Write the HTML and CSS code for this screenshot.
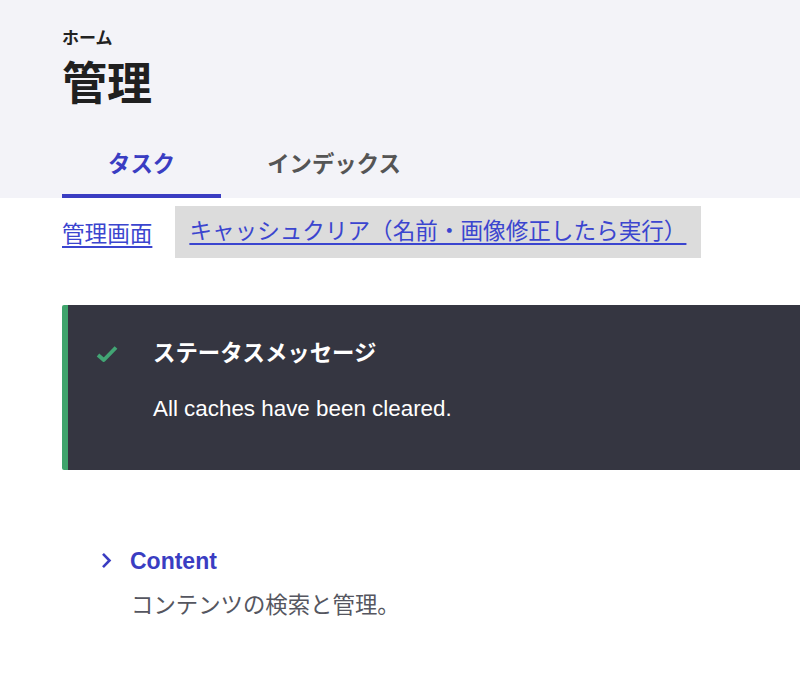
FILE: index.html
```html
<!DOCTYPE html>
<html lang="ja">
<head>
<meta charset="utf-8">
<title>管理</title>
<link rel="stylesheet" href="styles.css">
</head>
<body>
<header class="page-header">
  <nav class="breadcrumb"><a href="#">ホーム</a></nav>
  <h1 class="page-title">管理</h1>
  <nav class="tabs">
    <a class="tab is-active" href="#">タスク</a>
    <a class="tab" href="#">インデックス</a>
  </nav>
</header>
<main class="content">
  <div class="shortcuts">
    <a class="shortcut" href="#">管理画面</a>
    <span class="shortcut-box"><a class="shortcut" href="#">キャッシュクリア（名前・画像修正したら実行）</a></span>
  </div>
  <div class="message">
    <div class="message-icon">
      <svg width="22" height="18" viewBox="0 0 22 18"><path d="M2 10 L7.8 15 L20 2.5" fill="none" stroke="#42a574" stroke-width="3.8" stroke-linejoin="round"/></svg>
    </div>
    <div class="message-body">
      <h2 class="message-title">ステータスメッセージ</h2>
      <p class="message-text">All caches have been cleared.</p>
    </div>
  </div>
  <div class="admin-item">
    <div class="admin-head">
      <span class="chevron"><svg width="12" height="17" viewBox="0 0 12 17"><path d="M3 1.8 L9.5 8.5 L3 15.2" fill="none" stroke="#3a3dc2" stroke-width="2.6"/></svg></span>
      <a class="admin-link" href="#">Content</a>
    </div>
    <p class="admin-desc">コンテンツの検索と管理。</p>
  </div>
</main>
</body>
</html>
```
FILE: styles.css
```css
html, body {
  margin: 0;
  padding: 0;
}
body {
  font-family: "Liberation Sans", "Noto Sans CJK JP", sans-serif;
  color: #222;
  background: #fff;
  overflow: hidden;
}
a {
  text-decoration: none;
  color: inherit;
}
.page-header {
  background: #f3f3f8;
  padding: 29px 0 0 62px;
}
.breadcrumb {
  font-size: 17px;
  line-height: 20px;
  font-weight: bold;
  color: #222;
}
.page-title {
  margin: 11px 0 0;
  font-size: 45px;
  line-height: 50px;
  font-weight: bold;
  color: #202020;
}
.tabs {
  display: flex;
  margin-top: 24px;
}
.tab {
  padding: 16px 46px 14px;
  line-height: 30px;
  font-size: 22.4px;
  font-weight: bold;
  color: #555;
  border-bottom: 4px solid transparent;
}
.tab.is-active {
  color: #3a3dc2;
  border-bottom-color: #3a3dc2;
}
.shortcuts {
  display: flex;
  align-items: center;
  gap: 23px;
  margin: 8px 0 0 62px;
  font-size: 22.6px;
}
.shortcut {
  color: #3b45cf;
  text-decoration: underline;
  text-underline-offset: 4px;
  text-decoration-thickness: 1.5px;
}
.shortcut-box {
  display: block;
  background: #dcdcdc;
  height: 52px;
  line-height: 52px;
  padding: 0 15px 0 14px;
}
.message {
  display: flex;
  margin: 47px 0 0 62px;
  background: #353641;
  border-left: 6px solid #3fa46c;
  border-radius: 2px 0 0 2px;
  padding: 34px 0 46px 28px;
  color: #fff;
}
.message-icon {
  flex: none;
  width: 57px;
  height: 30px;
  display: flex;
  align-items: center;
}
.message-title {
  margin: 0;
  font-size: 22.4px;
  line-height: 30px;
  font-weight: bold;
}
.message-text {
  margin: 25px 0 0;
  font-size: 22.4px;
  line-height: 30px;
}
.admin-item {
  margin: 76px 0 0 100px;
}
.admin-head {
  display: flex;
  align-items: center;
  height: 30px;
}
.chevron {
  flex: none;
  width: 30px;
  display: flex;
  align-items: center;
  height: 17px;
  margin-top: -2px;
}
.admin-link {
  font-size: 23px;
  line-height: 30px;
  font-weight: bold;
  color: #3a3dc2;
}
.admin-desc {
  margin: 15px 0 0 31px;
  font-size: 22.4px;
  line-height: 30px;
  color: #555660;
}
```
